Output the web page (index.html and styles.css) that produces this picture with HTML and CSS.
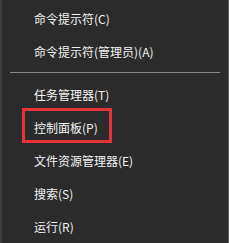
FILE: index.html
```html
<!DOCTYPE html>
<html>
  <head>
    <meta charset="utf-8" />
    <link rel="stylesheet" href="styles.css">
  </head>

  <body>
    <ul class="menu">
      <li class="menu-item">命令提示符(C)</li>
      <li class="menu-item">命令提示符(管理员)(A)</li>
      <li class="menu-divider"></li>
      <li class="menu-item">任务管理器(T)</li>
      <li class="menu-item marked">控制面板(P)</li>
      <li class="menu-item">文件资源管理器(E)</li>
      <li class="menu-item">搜索(S)</li>
      <li class="menu-item">运行(R)</li>
    </ul>
  </body>
</html>
```

FILE: styles.css
```css
html,
body {
  margin: 0;
  height: 100%;
  background-color: #2b2b2b;
}

.menu {
  list-style: none;
  margin: 0;
  padding: 2px 0 0;
  height: 100%;
  box-sizing: border-box;
  border-left: 2px solid #3c3c3c;
  border-right: 1px solid #585858;
  font-family: "Noto Sans CJK SC", "Noto Sans", sans-serif;
  font-size: 12px;
  color: #f2f2f2;
}

.menu-item {
  height: 33px;
  line-height: 33px;
  padding-left: 32px;
  white-space: nowrap;
  position: relative;
}

.menu-divider {
  height: 1px;
  margin: 4px 8px 5px 8px;
  background-color: #8a8a8a;
}

.marked::after {
  content: "";
  position: absolute;
  left: 20px;
  top: -3px;
  width: 84px;
  height: 29px;
  border: 3px solid #e5333a;
}
```
